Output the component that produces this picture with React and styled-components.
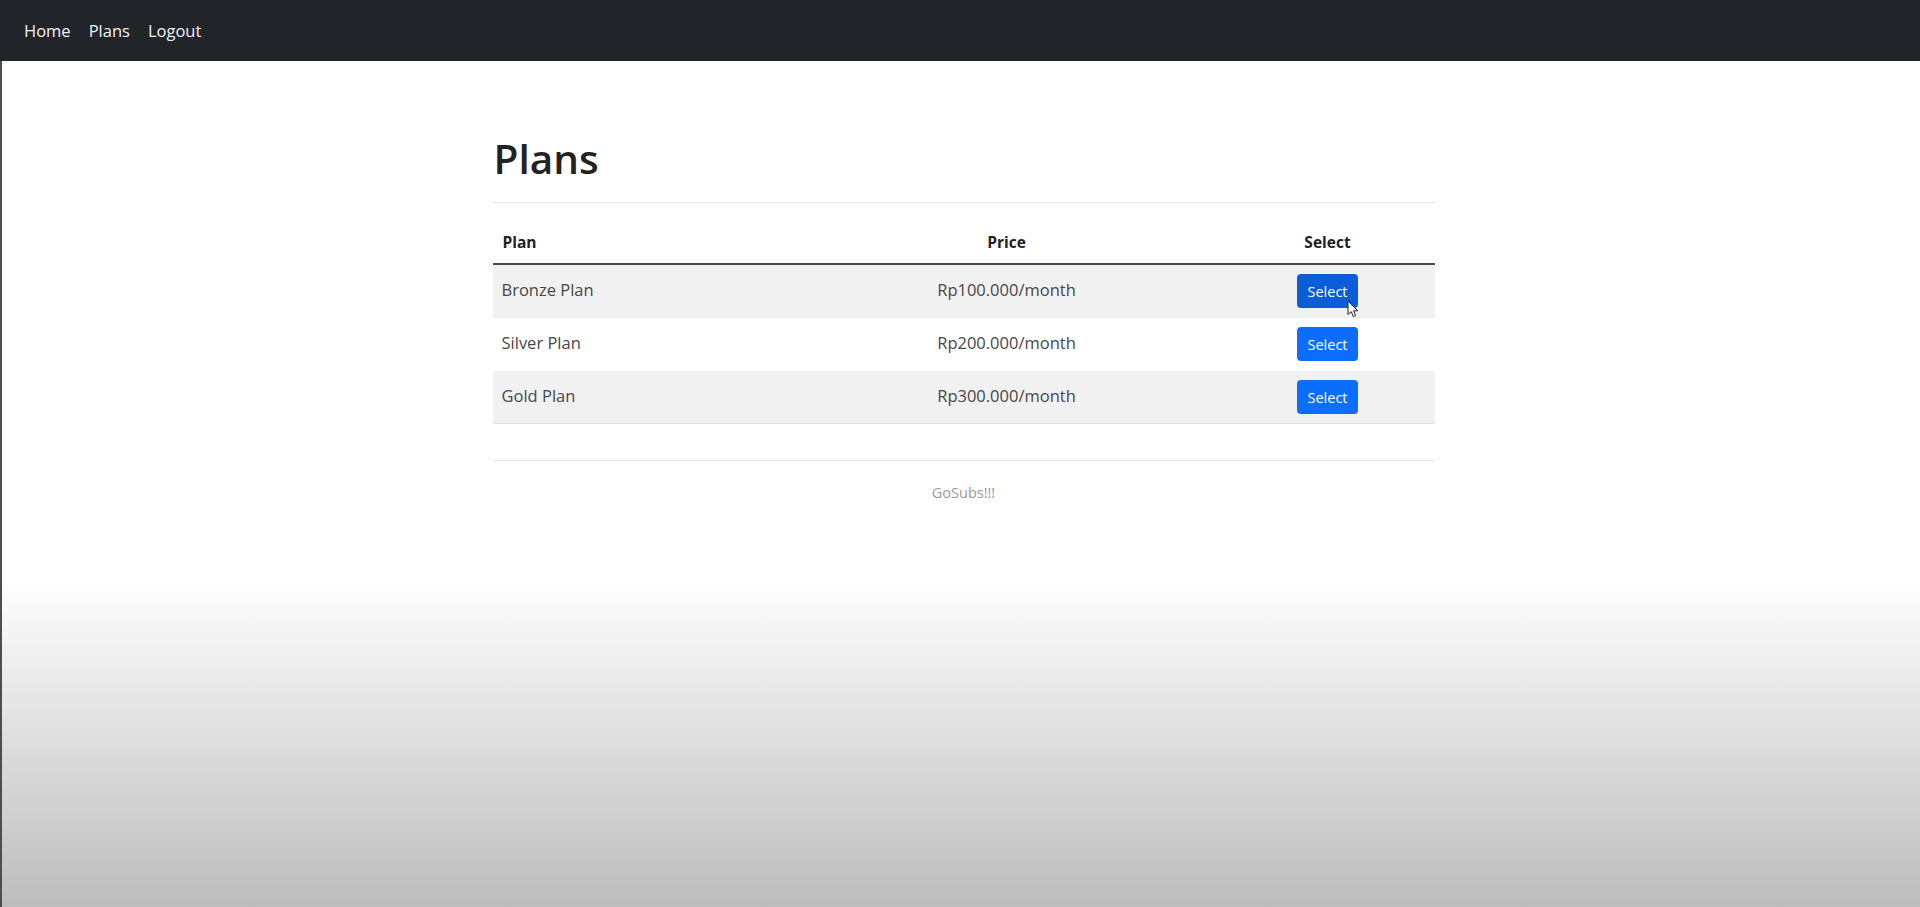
import React from "react";
import styled, { createGlobalStyle } from "styled-components";

const GlobalStyle = createGlobalStyle`
  html, body {
    margin: 0;
    padding: 0;
    min-height: 100%;
  }
  body {
    font-family: "Open Sans", "Noto Sans", "Liberation Sans", sans-serif;
    color: #212529;
    background: linear-gradient(to bottom, #fff 0, #fff 577px, #bcbcbc 907px);
    min-height: 907px;
  }
`;

const Navbar = styled.nav`
  display: flex;
  align-items: center;
  height: 61px;
  padding: 0 0 0 15px;
  background-color: #212529;
  box-sizing: border-box;
`;

const NavLink = styled.a`
  padding: 0 9px 1px;
  font-size: 16.5px;
  color: #f2f2f2;
  text-decoration: none;
  cursor: pointer;
`;

const Main = styled.main`
  border-left: 2px solid #4e4e4e;
  padding-left: 5px;
  min-height: 846px;
  box-sizing: border-box;
`;

const Container = styled.div`
  width: 942px;
  margin: 0 auto;
  padding-top: 73px;
`;

const Title = styled.h1`
  margin: 0;
  padding-left: 1px;
  font-size: 40.5px;
  line-height: 50px;
  font-weight: 600;
  color: #222;
`;

const Rule = styled.hr`
  margin: 18px 0 0;
  border: 0;
  border-top: 1px solid #e4e4e4;
`;

const Table = styled.table`
  width: 100%;
  margin: 17px 0 36px;
  border-collapse: collapse;
`;

const Th = styled.th`
  height: 44px;
  padding: 0 10px;
  box-sizing: border-box;
  text-align: ${({ align }) => align || "left"};
  font-size: 15.5px;
  font-weight: 700;
  color: #222;
  border-bottom: 2px solid #4a4a4a;
  vertical-align: middle;
`;

const Tr = styled.tr`
  background-color: ${({ striped }) => (striped ? "#f1f1f1" : "transparent")};
`;

const Td = styled.td`
  height: 49px;
  padding: 0 9px 3px;
  text-align: ${({ align }) => align || "left"};
  font-size: 16.5px;
  color: #474747;
  border-bottom: 1px solid ${({ last }) => (last ? "#e2e2e2" : "transparent")};
  vertical-align: middle;
`;

const ButtonCell = styled(Td)`
  height: 52px;
  padding-bottom: 0;
`;

const SelectButton = styled.button`
  position: relative;
  height: 34px;
  width: 61px;
  padding: 0;
  font-family: inherit;
  font-size: 14.5px;
  color: #fff;
  background-color: ${({ hovered }) => (hovered ? "#0b5ed7" : "#0d6efd")};
  border: 0;
  border-radius: 4px;
  cursor: pointer;
  vertical-align: middle;
`;

const Cursor = styled.svg`
  position: absolute;
  left: 50px;
  top: 26px;
  width: 12px;
  height: 18px;
  pointer-events: none;
`;

const Footer = styled.footer`
  margin-top: 21px;
  text-align: center;
  font-size: 14.5px;
  line-height: 22px;
  color: #9a9a9a;
`;

const plans = [
  { name: "Bronze Plan", price: "Rp100.000/month" },
  { name: "Silver Plan", price: "Rp200.000/month" },
  { name: "Gold Plan", price: "Rp300.000/month" },
];

export default function App() {
  return (
    <>
      <GlobalStyle />
      <Navbar>
        <NavLink>Home</NavLink>
        <NavLink>Plans</NavLink>
        <NavLink>Logout</NavLink>
      </Navbar>
      <Main>
        <Container>
          <Title>Plans</Title>
          <Rule />
          <Table>
            <colgroup>
              <col style={{ width: 300 }} />
              <col style={{ width: 428 }} />
              <col style={{ width: 214 }} />
            </colgroup>
            <thead>
              <tr>
                <Th>Plan</Th>
                <Th align="center">Price</Th>
                <Th align="center">Select</Th>
              </tr>
            </thead>
            <tbody>
              {plans.map((p, i) => {
                const last = i === plans.length - 1;
                return (
                  <Tr key={p.name} striped={i % 2 === 0}>
                    <Td last={last}>{p.name}</Td>
                    <Td align="center" last={last}>
                      {p.price}
                    </Td>
                    <ButtonCell align="center" last={last}>
                      <SelectButton hovered={i === 0}>
                        Select
                        {i === 0 && (
                          <Cursor viewBox="0 0 12 18">
                            <path
                              d="M1 1 L1 14.5 L4.2 11.6 L6.4 16.6 L8.6 15.6 L6.5 10.8 L10.8 10.8 Z"
                              fill="#fff"
                              stroke="#222"
                              strokeWidth="1"
                              strokeLinejoin="round"
                            />
                          </Cursor>
                        )}
                      </SelectButton>
                    </ButtonCell>
                  </Tr>
                );
              })}
            </tbody>
          </Table>
          <Rule />
          <Footer>GoSubs!!!</Footer>
        </Container>
      </Main>
    </>
  );
}
